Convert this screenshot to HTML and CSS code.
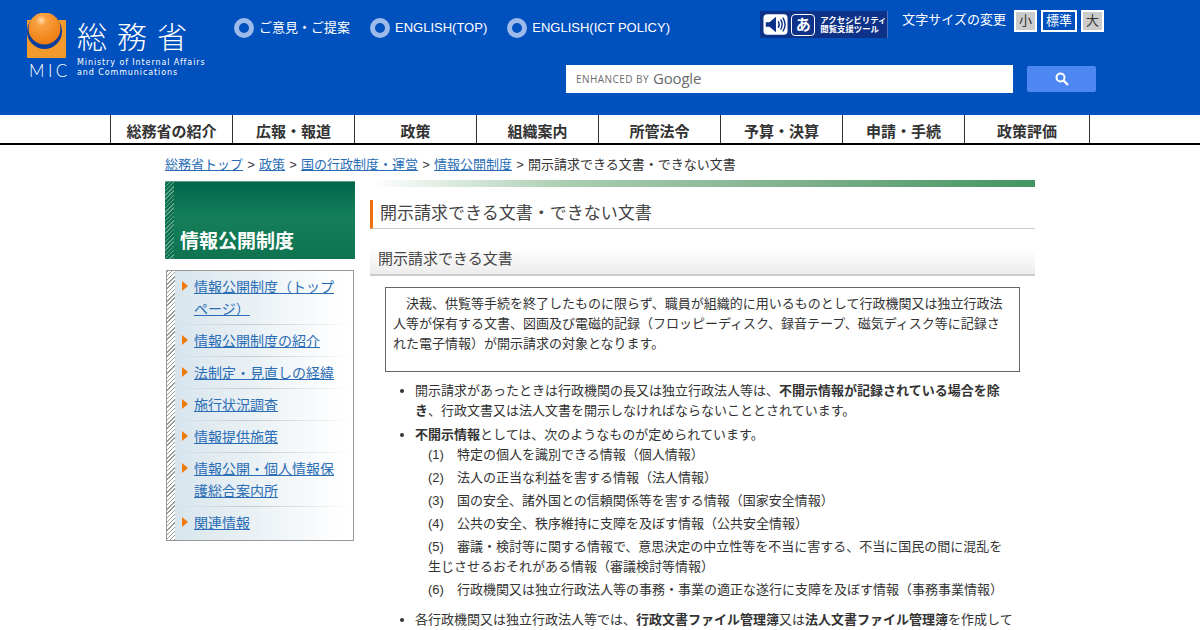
FILE: index.html
```html
<!DOCTYPE html>
<html lang="ja">
<head>
<meta charset="utf-8">
<title>開示請求できる文書・できない文書</title>
<link rel="stylesheet" href="styles.css">
</head>
<body>
<header class="site-header">
  <a class="logo" href="#">
    <span class="logo-mark">
      <svg width="40" height="46" viewBox="0 0 40 46">
        <defs>
          <radialGradient id="ball" cx="0.4" cy="0.25" r="0.75">
            <stop offset="0" stop-color="#ffdcb0"/>
            <stop offset="0.22" stop-color="#f8a040"/>
            <stop offset="1" stop-color="#ee7d10"/>
          </radialGradient>
        </defs>
        <rect x="0" y="7" width="39" height="38" fill="#f39a2c"/>
        <circle cx="17.500" cy="18.500" r="17.500" fill="#0a3d9c"/>
        <circle cx="17.500" cy="15.500" r="16" fill="url(#ball)"/>
      </svg>
      <span class="logo-mic">MIC</span>
    </span>
    <span class="logo-text">
      <span class="logo-ja">総務省</span>
      <span class="logo-en">Ministry of Internal Affairs<br>and Communications</span>
    </span>
  </a>
  <div class="header-main">
    <div class="header-top">
      <ul class="quick-links">
        <li><a href="#">ご意見・ご提案</a></li>
        <li><a href="#">ENGLISH(TOP)</a></li>
        <li><a href="#">ENGLISH(ICT POLICY)</a></li>
      </ul>
      <div class="tools">
        <a class="access-tool" href="#">
          <svg width="25" height="23" viewBox="0 0 27 23">
            <rect x="0.500" y="0.500" width="26" height="22" rx="4" fill="#fff"/>
            <path d="M3 9h4l7-6v17l-7-6H3z" fill="#0b2f86"/>
            <path d="M16.500 8q2 3.500 0 7M19 6q3.500 5.500 0 11M21.500 4q4.500 7.500 0 15" fill="none" stroke="#0b2f86" stroke-width="1.500"/>
          </svg>
          <span class="access-kana">あ</span>
          <span class="access-label">アクセシビリティ<br>閲覧支援ツール</span>
        </a>
        <span class="size-label">文字サイズの変更</span>
        <div class="size-buttons">
          <a class="size-btn" href="#">小</a>
          <a class="size-btn size-btn-active" href="#">標準</a>
          <a class="size-btn" href="#">大</a>
        </div>
      </div>
    </div>
    <form class="search">
      <div class="search-box"><span class="search-enhanced">ENHANCED BY</span><span class="search-google">Google</span></div>
      <button class="search-btn" type="button" aria-label="検索">
        <svg width="14" height="14" viewBox="0 0 14 14"><circle cx="5.500" cy="5.500" r="4" fill="none" stroke="#fff" stroke-width="2"/><path d="M8.500 8.500L13 13" stroke="#fff" stroke-width="2.400"/></svg>
      </button>
    </form>
  </div>
</header>
<nav class="global-nav">
  <ul>
    <li><a href="#">総務省の紹介</a></li>
    <li><a href="#">広報・報道</a></li>
    <li><a href="#">政策</a></li>
    <li><a href="#">組織案内</a></li>
    <li><a href="#">所管法令</a></li>
    <li><a href="#">予算・決算</a></li>
    <li><a href="#">申請・手続</a></li>
    <li><a href="#">政策評価</a></li>
  </ul>
</nav>
<div class="wrapper">
  <p class="breadcrumb"><a href="#">総務省トップ</a> &gt; <a href="#">政策</a> &gt; <a href="#">国の行政制度・運営</a> &gt; <a href="#">情報公開制度</a> &gt; 開示請求できる文書・できない文書</p>
  <div class="columns">
    <aside class="sidebar">
      <h2 class="side-title">情報公開制度</h2>
      <ul class="side-nav">
        <li><a href="#">情報公開制度（トップページ）</a></li>
        <li><a href="#">情報公開制度の紹介</a></li>
        <li><a href="#">法制定・見直しの経緯</a></li>
        <li><a href="#">施行状況調査</a></li>
        <li><a href="#">情報提供施策</a></li>
        <li><a href="#">情報公開・個人情報保護総合案内所</a></li>
        <li><a href="#">関連情報</a></li>
      </ul>
    </aside>
    <main class="content">
      <div class="top-bar"></div>
      <h1 class="page-title">開示請求できる文書・できない文書</h1>
      <h2 class="section-title">開示請求できる文書</h2>
      <div class="notice">
        <p>決裁、供覧等手続を終了したものに限らず、職員が組織的に用いるものとして行政機関又は独立行政法人等が保有する文書、図画及び電磁的記録（フロッピーディスク、録音テープ、磁気ディスク等に記録された電子情報）が開示請求の対象となります。</p>
      </div>
      <ul class="body-list">
        <li>開示請求があったときは行政機関の長又は独立行政法人等は、<strong>不開示情報が記録されている場合を除き</strong>、行政文書又は法人文書を開示しなければならないこととされています。</li>
        <li><strong>不開示情報</strong>としては、次のようなものが定められています。
          <ol class="sub-list">
            <li>(1)　特定の個人を識別できる情報（個人情報）</li>
            <li>(2)　法人の正当な利益を害する情報（法人情報）</li>
            <li>(3)　国の安全、諸外国との信頼関係等を害する情報（国家安全情報）</li>
            <li>(4)　公共の安全、秩序維持に支障を及ぼす情報（公共安全情報）</li>
            <li>(5)　審議・検討等に関する情報で、意思決定の中立性等を不当に害する、不当に国民の間に混乱を生じさせるおそれがある情報（審議検討等情報）</li>
            <li>(6)　行政機関又は独立行政法人等の事務・事業の適正な遂行に支障を及ぼす情報（事務事業情報）</li>
          </ol>
        </li>
        <li>各行政機関又は独立行政法人等では、<strong>行政文書ファイル管理簿</strong>又は<strong>法人文書ファイル管理簿</strong>を作成して</li>
      </ul>
    </main>
  </div>
</div>
</body>
</html>
```
FILE: styles.css
```css
html, body { margin: 0; padding: 0; height: 630px; overflow: hidden; background: #fff; }
body { font-family: "Liberation Sans", "Noto Sans CJK JP", sans-serif; font-size: 13px; line-height: 20px; color: #333; }
ul, ol { margin: 0; padding: 0; list-style: none; }
h1, h2, p { margin: 0; }
a { color: #2a6db5; }

.site-header { height: 115px; box-sizing: border-box; background: #0050be; display: flex; padding: 10px 96px 0 27px; }
.logo { display: flex; width: 180px; height: 70px; margin-top: 3px; color: #fff; text-decoration: none; flex: none; }
.logo-mark { width: 50px; flex: none; display: flex; flex-direction: column; }
.logo-mic { font-family: "Lato", sans-serif; font-size: 17px; line-height: 16px; letter-spacing: 3.500px; margin: 4px 0 0 2px; font-weight: 300; }
.logo-text { display: flex; flex-direction: column; }
.logo-ja { font-size: 30px; line-height: 30px; letter-spacing: 10px; margin-top: 7px; font-family: "Noto Sans CJK JP", sans-serif; font-weight: 300; white-space: nowrap; }
.logo-en { font-family: "DejaVu Sans", sans-serif; font-size: 8px; line-height: 10px; letter-spacing: .9px; margin-top: 8px; white-space: nowrap; }

.header-main { flex: 1; margin-left: 27px; display: flex; flex-direction: column; }
.header-top { display: flex; justify-content: space-between; align-items: flex-start; height: 55px; }
.quick-links { display: flex; gap: 20px; margin-top: 8px; }
.quick-links li { display: flex; align-items: center; gap: 5px; height: 20px; }
.quick-links li::before { content: ""; width: 10px; height: 10px; border: 5px solid #9dbaeb; border-radius: 50%; }
.quick-links a { color: #fff; text-decoration: none; }

.tools { display: flex; align-items: flex-start; }
.access-tool { display: flex; align-items: center; gap: 3px; width: 128px; height: 27px; margin-top: 1px; padding-left: 3px; box-sizing: border-box; background: #0d3288; border-right: 1px solid #4a73c0; color: #fff; text-decoration: none; }
.access-kana { width: 22px; height: 20px; border: 1.500px solid #fff; border-radius: 4px; font-size: 15px; font-weight: 700; line-height: 20px; text-align: center; }
.access-label { font-size: 8.400px; line-height: 9px; font-weight: 700; margin-left: 2px; white-space: nowrap; }
.size-label { color: #fff; margin-left: 14px; line-height: 20px; }
.size-buttons { display: flex; gap: 4px; margin-left: 8px; }
.size-btn { height: 18px; padding: 0 3px; min-width: 13px; text-align: center; border: 2px solid #fff; background: #ccc; color: #333; line-height: 18px; text-decoration: none; }
.size-btn-active { background: #0050be; color: #fff; }

.search { display: flex; align-items: center; margin-left: 332px; }
.search-box { width: 447px; height: 28px; box-sizing: border-box; background: #fff; display: flex; align-items: center; padding-left: 10px; color: #6b6b6b; }
.search-enhanced { font-family: "Open Sans", sans-serif; font-size: 10px; letter-spacing: .45px; }
.search-google { font-family: "Open Sans", sans-serif; font-size: 15px; margin-left: 4px; letter-spacing: -.2px; margin-top: -2px; }
.search-btn { width: 69px; height: 26px; margin-left: 14px; padding: 0; border: 0; border-radius: 2px; background: #4d87f2; display: flex; align-items: center; justify-content: center; }

.global-nav { height: 28px; border-bottom: 2px solid #000; padding-left: 110px; }
.global-nav ul { display: flex; height: 28px; }
.global-nav li { width: 121px; border-left: 1px solid #333; text-align: center; }
.global-nav li:last-child { width: 124px; border-right: 1px solid #333; }
.global-nav a { display: block; color: #333; font-size: 15px; font-weight: 700; line-height: 33px; height: 28px; overflow: hidden; text-decoration: none; }

.wrapper { width: 870px; margin-left: 165px; }
.breadcrumb { height: 35px; padding-top: 10px; box-sizing: border-box; line-height: 20px; word-spacing: .6px; }
.columns { display: flex; gap: 15px; }

.sidebar { width: 190px; flex: none; }
.side-title { height: 78px; box-sizing: border-box; margin-top: 1px; padding: 46px 0 0 15px; color: #fff; font-size: 19px; line-height: 28px; font-weight: 700; border-top: 1px solid #5d9e85;
  background: repeating-linear-gradient(135deg, #5fa48b 0 1px, #0d7050 1px 3px) left / 9px 100% no-repeat, linear-gradient(#00654a, #157f5a 45%, #0f7350); }
.side-nav { margin: 11px 0 0 1px; width: 188px; box-sizing: border-box; padding: 0 0 1px 8px; border: 1px solid #999;
  background: repeating-linear-gradient(135deg, #9a9a9a 0 1px, #fff 1px 3px) left / 8px 100% no-repeat, linear-gradient(90deg, #d6e4ec, #fff 95%); }
.side-nav li { position: relative; padding: 5px 18px 5px 19px; line-height: 22px; font-size: 14px; background: linear-gradient(90deg, transparent, #c8c8c8 40%, transparent) bottom / 100% 1px no-repeat; }
.side-nav li:last-child { background: none; }
.side-nav li::before { content: ""; position: absolute; left: 7px; top: 10px; border-style: solid; border-width: 5px 0 5px 6px; border-color: transparent transparent transparent #f07a10; }

.content { flex: 1; min-width: 0; }
.top-bar { height: 7px; background: linear-gradient(90deg, #fff, #a9cdb0 30%, #7fb08c 65%, #429560); }
.page-title { margin-top: 13px; height: 29px; box-sizing: border-box; padding-left: 7px; border-left: 3px solid #ee6f10; border-bottom: 1px solid #ccc; font-size: 17px; line-height: 27px; font-weight: 400; color: #444; }
.section-title { margin-top: 19px; height: 28px; box-sizing: border-box; padding-left: 8px; font-size: 15px; line-height: 22px; font-weight: 400; color: #444; border-bottom: 2px solid #ccc; background: linear-gradient(#fff, #ececec); }
.notice { margin: 11px 15px 0; height: 85px; box-sizing: border-box; border: 1px solid #666; padding: 6px 7px; }
.notice p { text-indent: 13px; }
.body-list { margin: 9px 0 0 45px; width: 599px; list-style: disc; }
.body-list > li { margin-bottom: 4px; }
.body-list strong { font-weight: 700; }
.sub-list { margin: 0 0 0 13px; padding-bottom: 6px; }
.sub-list li { margin-top: 3px; }
.sub-list li:first-child { margin-top: 0; }
```
